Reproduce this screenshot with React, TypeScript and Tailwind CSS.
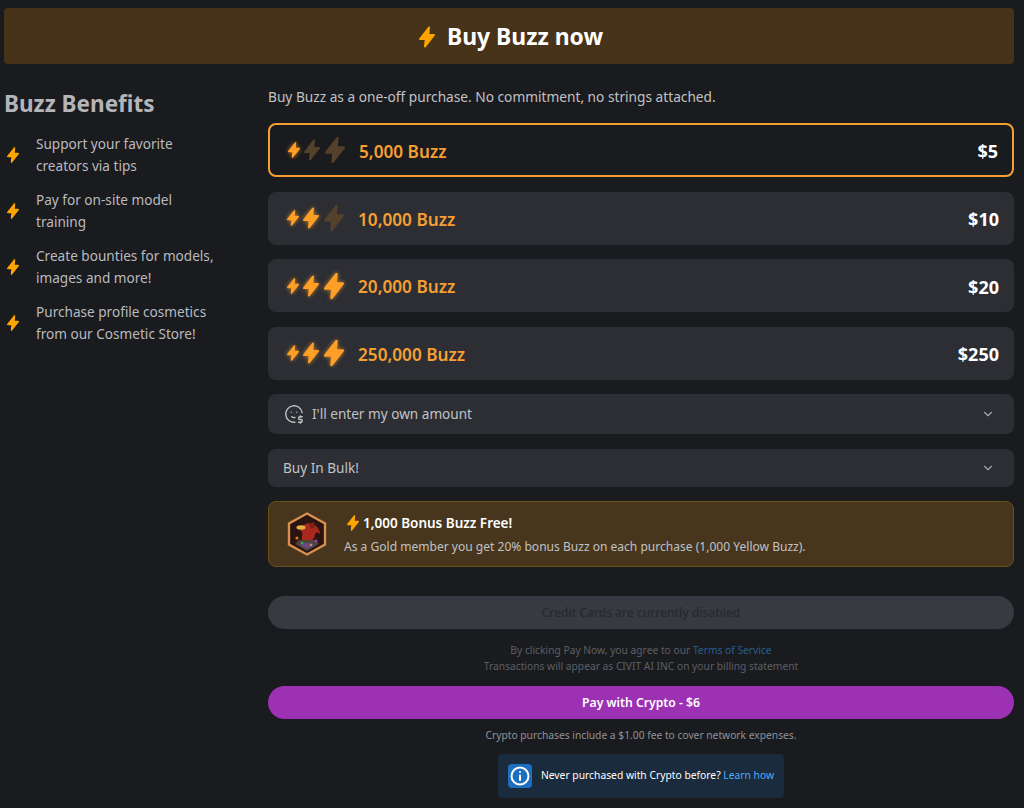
import { ReactNode } from "react";
import { ChevronDown } from "lucide-react";
import { TbMoodDollar } from "react-icons/tb";

const benefits = [
  ["Support your favorite", "creators via tips"],
  ["Pay for on-site model", "training"],
  ["Create bounties for models,", "images and more!"],
  ["Purchase profile cosmetics", "from our Cosmetic Store!"],
];

const packs = [
  { buzz: "5,000 Buzz", price: "$5", lit: 1, selected: true },
  { buzz: "10,000 Buzz", price: "$10", lit: 2, selected: false },
  { buzz: "20,000 Buzz", price: "$20", lit: 3, selected: false },
  { buzz: "250,000 Buzz", price: "$250", lit: 3, selected: false },
];

function Bolt({ size, className }: { size: number; className?: string }) {
  return (
    <svg width={size} height={size} viewBox="0 0 24 24" fill="currentColor" className={className}>
      <path d="M14 2.5L5 14H10.8L10 21.5L19 10H13.2Z" stroke="currentColor" strokeWidth="2" strokeLinejoin="round" />
    </svg>
  );
}

function BoltStack({ lit }: { lit: number }) {
  const litClass = "shrink-0 text-[#ff9f28] drop-shadow-[0_0_2px_rgba(255,159,40,0.75)]";
  const dimClass = "shrink-0 text-[#54412c] blur-[0.5px]";
  return (
    <div className="flex items-center">
      <Bolt size={18} className={lit > 0 ? litClass : dimClass} />
      <Bolt size={24} className={lit > 1 ? `-ml-[3.5px] ${litClass}` : `-ml-[3.5px] ${dimClass}`} />
      <Bolt size={30} className={lit > 2 ? `-ml-[3.5px] ${litClass}` : `-ml-[3.5px] ${dimClass}`} />
    </div>
  );
}

function PackRow({ buzz, price, lit, selected }: { buzz: string; price: string; lit: number; selected: boolean }) {
  return (
    <div
      className={
        selected
          ? "h-[54px] rounded-lg border-2 border-[#f59f32] bg-[#1a1b1e] flex items-center pl-[15px] pr-[14px]"
          : "h-[53px] rounded-lg bg-[#2c2e33] flex items-center pl-[16px] pr-[15px]"
      }
    >
      <BoltStack lit={lit} />
      <span className="ml-[9px] pt-[3px] text-[17.2px] font-semibold text-[#f59f32]">{buzz}</span>
      <span className="ml-auto pt-[3px] text-[18px] font-bold text-white">{price}</span>
    </div>
  );
}

function Dropdown({ children }: { children: ReactNode }) {
  return (
    <div className="rounded-lg bg-[#2c2e33] flex items-center pl-[15px] pr-[19px] text-[13.6px] text-[#c1c2c5] h-full">
      {children}
      <ChevronDown size={14} className="ml-auto text-[#a6a7ab]" />
    </div>
  );
}

function Badge() {
  return (
    <svg width="40" height="44" viewBox="0 0 40 44" className="shrink-0 blur-[0.4px]">
      <polygon points="20,1.5 38,11.5 38,32.5 20,42.5 2,32.5 2,11.5" fill="#26120f" stroke="#d9904f" strokeWidth="2.4" />
      <polygon points="20,5 34.5,13 34.5,31 20,39 5.5,31 5.5,13" fill="#2a1512" />
      <path d="M13 17c2-4 8-7 12-5 4 1 8 5 8 10-2-2-4-2-5 0 0 4-3 8-8 8-4 0-6-3-5-6 1-2 0-4-2-7z" fill="#a82a1e" />
      <path d="M22 12l5-2 1 5-4 2z" fill="#7c1f1a" />
      <ellipse cx="14" cy="15.5" rx="4.5" ry="2.2" fill="#e8b040" />
      <path d="M8 32l12 7 12-7-4-4H12z" fill="#4f4438" />
      <path d="M13 33l7 4 7-4-3-2h-8z" fill="#6a4a80" />
      <circle cx="10" cy="26" r="1.6" fill="#e07a20" />
      <circle cx="29" cy="29" r="1.5" fill="#8a3fd0" />
      <circle cx="15" cy="31" r="1.2" fill="#3fae6a" />
      <circle cx="24" cy="33" r="1" fill="#d8b050" />
    </svg>
  );
}

export default function App() {
  return (
    <div className="min-h-[808px] bg-[#1a1b1e] font-['Noto_Sans','Open_Sans',sans-serif] text-[#c1c2c5] pt-2 pl-1 pr-[10px] overflow-hidden">
      <div className="h-14 rounded bg-[#47321a] flex items-center justify-center gap-[8px] pt-[2px]">
        <Bolt size={24} className="text-[#ffa500]" />
        <h1 className="text-[22.9px] font-bold text-white pt-[1px]">Buy Buzz now</h1>
      </div>

      <div className="flex mt-[22px]">
        <div className="w-[264px] shrink-0">
          <h2 className="text-[22.5px] font-bold leading-[34px] mt-[1px] text-[#b4b5b9]">Buzz Benefits</h2>
          <ul className="mt-[12px] flex flex-col gap-[12px]">
            {benefits.map((lines) => (
              <li key={lines[0]} className="flex items-center">
                <Bolt size={18} className="text-[#ffa500] shrink-0" />
                <div className="ml-[14px] text-[13.6px] leading-[22px] text-[#b9babe]">
                  <div>{lines[0]}</div>
                  <div>{lines[1]}</div>
                </div>
              </li>
            ))}
          </ul>
        </div>

        <div className="flex-1 min-w-0">
          <p className="text-[13.7px] leading-[22px] text-[#c1c2c5]">
            Buy Buzz as a one-off purchase. No commitment, no strings attached.
          </p>
          <div className="mt-[15px] flex flex-col gap-[14.5px]">
            {packs.map((p) => (
              <PackRow key={p.buzz} {...p} />
            ))}
            <div className="h-[40px]">
              <Dropdown>
                <TbMoodDollar size={22} strokeWidth={1.5} className="mr-[7px] text-[#c1c2c5]" />
                <span>I'll enter my own amount</span>
              </Dropdown>
            </div>
            <div className="h-[38px]">
              <Dropdown>
                <span className="pt-[1px]">Buy In Bulk!</span>
              </Dropdown>
            </div>
            <div className="h-[66px] rounded-lg border border-[#6b5119] bg-[#47361d] flex items-center pl-[18px]">
              <Badge />
              <div className="ml-[17px] pt-[1px]">
                <div className="flex items-center text-[13.5px] font-semibold text-white leading-[20px]">
                  <Bolt size={18} className="text-[#ffa500] mr-[1px]" />
                  1,000 Bonus Buzz Free!
                </div>
                <p className="mt-[4px] text-[12.05px] text-[#c1c2c5] leading-[20px]">
                  As a Gold member you get 20% bonus Buzz on each purchase (1,000 Yellow Buzz).
                </p>
              </div>
            </div>
          </div>

          <button className="mt-[29px] h-[33px] w-full rounded-full bg-[#373a40] pt-[1px] text-[12px] font-medium text-[#28292d]">
            Credit Cards are currently disabled
          </button>
          <div className="mt-[13px] text-center text-[10.25px] leading-[16px] text-[#5c5f66]">
            <p>
              By clicking Pay Now, you agree to our <span className="text-[#2b5f8e]">Terms of Service</span>
            </p>
            <p>Transactions will appear as CIVIT AI INC on your billing statement</p>
          </div>
          <button className="mt-[12px] h-[33px] w-full rounded-full bg-[#9c31b3] pt-[1px] text-[12.2px] font-semibold text-white">
            Pay with Crypto - $6
          </button>
          <p className="mt-[8px] text-center text-[10.25px] leading-[16px] text-[#909296]">
            Crypto purchases include a $1.00 fee to cover network expenses.
          </p>
          <div className="mt-[11px] w-fit mx-auto h-[44px] rounded bg-[#1a2b3d] flex items-center pl-[10px] pr-[10px]">
            <div className="w-6 h-6 rounded-sm bg-[#1c6fbf] flex items-center justify-center">
              <svg width="24" height="24" viewBox="0 0 24 24" fill="none" stroke="white" strokeWidth="2" strokeLinecap="round">
                <circle cx="12" cy="12" r="8.5" />
                <path d="M12 11.5v4.5" />
                <path d="M12 8v.01" />
              </svg>
            </div>
            <p className="ml-[9px] text-[10.3px] text-white">
              Never purchased with Crypto before? <span className="text-[#4dabf7]">Learn how</span>
            </p>
          </div>
        </div>
      </div>
    </div>
  );
}
